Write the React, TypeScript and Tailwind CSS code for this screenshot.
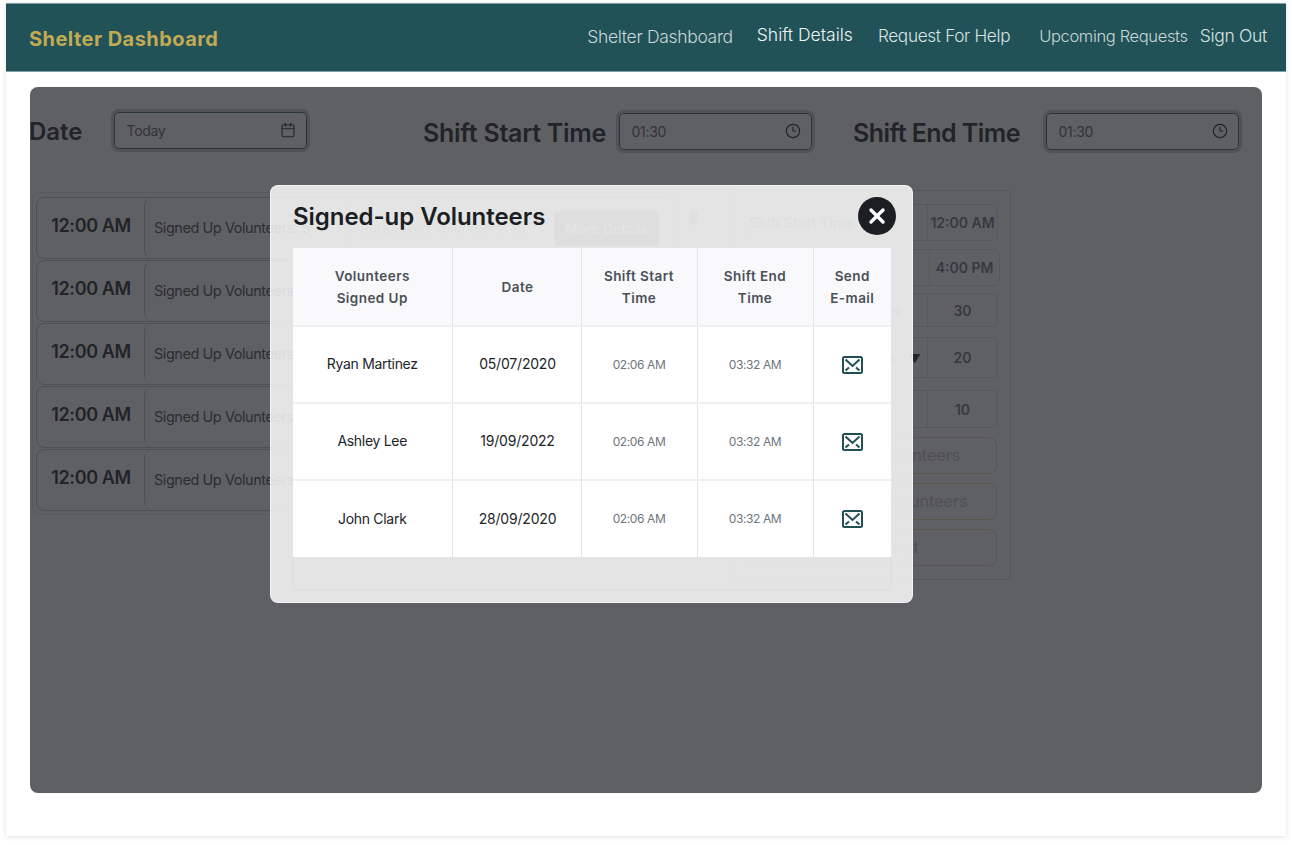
import { Calendar, Clock3, X } from "lucide-react";

const sans = "font-['Inter','Noto_Sans',sans-serif]";

const volunteers = [
  { name: "Ryan Martinez", date: "05/07/2020" },
  { name: "Ashley Lee", date: "19/09/2022" },
  { name: "John Clark", date: "28/09/2020" },
];

function MailIcon() {
  return (
    <svg width="21" height="18" viewBox="0 0 21 18" fill="none" className="mx-auto" stroke="#214f54">
      <rect x="1" y="1" width="19" height="16" rx="1.5" strokeWidth="2" />
      <path d="M3.5 3.5 10.5 10 17.5 3.5" strokeWidth="2" />
      <path d="M3.5 14.5 7 11.5M17.5 14.5 14 11.5" strokeWidth="2" />
    </svg>
  );
}

function TimeField({ value, className }: { value: string; className?: string }) {
  return (
    <div className={`flex h-[37px] w-[193px] items-center justify-between rounded-[5px] border-[1.5px] border-[#3f5f68] pl-[11.5px] pr-[10.5px] text-[14px] tracking-[-0.3px] text-[#5c6166] ring-[3px] ring-[#c8ced2] ${className ?? ""}`}>
      <span className="pt-px">{value}</span>
      {value === "Today" ? (
        <Calendar size={16} strokeWidth={1.6} className="text-[#212529]" />
      ) : (
        <Clock3 size={16} strokeWidth={1.8} className="text-[#212529]" />
      )}
    </div>
  );
}

function ShiftRow() {
  return (
    <div className="flex h-[62px] shrink-0 items-stretch rounded-lg border border-[#c1c4c8]">
      <div className="flex w-[107px] shrink-0 items-center justify-center pb-1.5 pl-px text-[18px] font-semibold tracking-[-0.35px] text-[#212529]">
        12:00 AM
      </div>
      <div className="flex w-[205px] shrink-0 items-center rounded-lg border-l border-[#c1c4c8] pl-[9px] text-[14.5px] tracking-[-0.45px] text-[#45494e]">
        Signed Up Volunteers: 5
      </div>
      <div className="flex w-[205px] shrink-0 items-center border-l border-[#d5d7da] pl-2.5 text-[14.5px] tracking-[-0.3px] text-[#9ca1a6]">
        Requested volunteers: 15
      </div>
      <div className="flex items-center">
        <div className="flex h-[35px] w-[105px] items-center justify-center rounded bg-[#848a8c] text-[14px] text-white">
          More Details
        </div>
      </div>
    </div>
  );
}

function DetailRow({ label, value, className, labelClass }: { label: React.ReactNode; value: string; className: string; labelClass: string }) {
  return (
    <div className={`flex items-center rounded-md border border-[#e0e2e4] ${className}`}>
      <div className={`flex-1 text-[14px] font-semibold text-[#8a8d92] ${labelClass}`}>{label}</div>
      <div className="flex h-full w-[70px] items-center justify-center border-l border-[#e0e2e4] text-[14px] font-semibold text-[#6c7380]">
        {value}
      </div>
    </div>
  );
}

function ActionButton({ label }: { label: string }) {
  return (
    <div className="flex h-[37px] w-[252px] items-center justify-center rounded-lg border border-[#e5d9a0] text-[16.5px] tracking-[-0.2px] text-[#c9c8b0]">
      {label}
    </div>
  );
}

export default function App() {
  return (
    <div className={`h-[845px] bg-white pt-[3px] ${sans}`}>
      <div className="mx-[6px] h-[833px] bg-white shadow-[0_1px_5px_rgba(0,0,0,0.12)]">
        <nav className="flex h-[69px] items-center border-y border-[#7f9ea1] bg-[#215257] pb-1 pl-[23px] pr-[19px]">
          <div className="mr-auto pt-1.5 text-[20px] font-bold tracking-[0.45px] text-[#c3aa55]">Shelter Dashboard</div>
          <a className="pt-1 text-[17.5px] font-light tracking-[-0.33px] text-[#c9d6d7]">Shelter Dashboard</a>
          <a className="ml-6 text-[17.5px] font-light tracking-[0px] text-[#f1f5f5]">Shift Details</a>
          <a className="ml-[25px] text-[17.2px] font-light tracking-[-0.33px] text-[#d8e2e2]">Request For Help</a>
          <a className="ml-[29px] pt-0.5 text-[16.5px] font-light tracking-[-0.35px] text-[#c9d6d7]">Upcoming Requests</a>
          <a className="ml-3 pt-0.5 text-[17.5px] font-light tracking-[-0.3px] text-[#d8e2e2]">Sign Out</a>
        </nav>

        <main className="relative mx-6 mt-[15px] h-[706px] overflow-hidden rounded-lg bg-white">
          <div className="mt-[21px] flex h-[44px] items-center">
            <div className="-ml-px w-[85px] pt-1 text-[24px] font-semibold leading-none text-[#212529]">Date</div>
            <TimeField value="Today" />
            <div className="ml-[116px] w-[196px] pt-[7px] text-[25px] font-semibold leading-none tracking-[-0.27px] text-[#212529]">
              Shift Start Time
            </div>
            <TimeField value="01:30" className="mt-0.5" />
            <div className="ml-[41px] w-[193px] pt-[7px] text-[25px] font-semibold leading-none tracking-[-0.55px] text-[#212529]">
              Shift End Time
            </div>
            <TimeField value="01:30" className="mt-0.5" />
          </div>

          <div className="flex items-start pt-10">
            <div className="ml-0.5 flex h-[323px] w-[648px] flex-col gap-px overflow-hidden rounded-lg border border-[#e6e7e9] py-1 pl-[3px] pr-1">
              <ShiftRow />
              <ShiftRow />
              <ShiftRow />
              <ShiftRow />
              <ShiftRow />
            </div>
            <div className="relative ml-[9px] mt-[19px] h-[14px] w-[9px] rounded-[3px] bg-[#9aa0a3]" />
            <div className="-mt-0.5 ml-[32px] h-[390px] w-[281px] rounded border border-[#dadcdf] pl-[14px] pt-[13px]">
              <DetailRow label="Shift Start Time" value="12:00 AM" className="h-[37px] w-[253px]" labelClass="pl-[3px]" />
              <DetailRow label="Shift End Time" value="4:00 PM" className="mt-2 h-[37px] w-[255px]" labelClass="pl-[3px]" />
              <DetailRow label="Total Volunteers" value="30" className="mt-[7px] h-[34px] w-[253px]" labelClass="pr-[26px] text-right" />
              <DetailRow
                label={
                  <>
                    Signed Volunteers<span className="ml-[13px] text-[12px] text-[#212529]">▼</span>
                  </>
                }
                value="20"
                className="mt-2.5 h-[41px] w-[253px]"
                labelClass="pr-[6px] text-right"
              />
              <DetailRow label="Open Slots" value="10" className="mt-3 h-[38px] w-[253px]" labelClass="pl-[3px]" />
              <div className="mt-[9px] flex flex-col gap-[9px]">
                <ActionButton label="Message All Volunteers" />
                <ActionButton label="Message Past Volunteers" />
                <ActionButton label="Edit Request" />
              </div>
            </div>
          </div>

          <div className="absolute inset-0 bg-[#212228]/[0.72]">
            <div className="absolute left-[240px] top-[98px] h-[418px] w-[643px] rounded-lg border border-white/60 bg-white/[0.83] pl-[22px] pt-[13px]">
              <h2 className="text-[24px] font-semibold leading-9 tracking-[-0.05px] text-[#1b1e23]">Signed-up Volunteers</h2>
              <button className="absolute left-[587px] top-[11px] flex h-[38px] w-[38px] items-center justify-center rounded-full bg-[#1b1e23] text-white">
                <X size={24} strokeWidth={3.4} />
              </button>

              <table className="mt-[13px] w-[598px] table-fixed border-collapse rounded-t text-center">
                <colgroup>
                  <col className="w-[159px]" />
                  <col className="w-[129px]" />
                  <col className="w-[116px]" />
                  <col className="w-[116px]" />
                  <col className="w-[78px]" />
                </colgroup>
                <thead>
                  <tr className="h-[78px] border-b-2 border-[#eef0f3] bg-[#f9f9fb] text-[13.5px] font-semibold leading-[22px] tracking-[0.45px] text-[#495057]">
                    <th className="font-semibold">
                      Volunteers
                      <br />
                      Signed Up
                    </th>
                    <th className="border-l border-[#e3e4ea] pl-0.5 font-semibold">Date</th>
                    <th className="border-l border-[#e3e4ea] font-semibold">
                      Shift Start
                      <br />
                      Time
                    </th>
                    <th className="border-l border-[#e3e4ea] font-semibold">
                      Shift End
                      <br />
                      Time
                    </th>
                    <th className="border-l border-[#e3e4ea] font-semibold">
                      Send
                      <br />
                      E-mail
                    </th>
                  </tr>
                </thead>
                <tbody>
                  {volunteers.map((v, i) => (
                    <tr key={v.name} className={`h-[77px] bg-white ${i < 2 ? "border-b-2 border-[#eef0f3]" : ""}`}>
                      <td className="pb-0.5 text-[14px] tracking-[-0.3px] text-[#212529]">{v.name}</td>
                      <td className="border-l border-[#e3e4ea] pb-0.5 pl-0.5 text-[14px] tracking-[-0.2px] text-[#212529]">{v.date}</td>
                      <td className="border-l border-[#e3e4ea] text-[12px] tracking-[-0.4px] text-[#6c757d]">02:06 AM</td>
                      <td className="border-l border-[#e3e4ea] text-[12px] tracking-[-0.4px] text-[#6c757d]">03:32 AM</td>
                      <td className="border-l border-[#e3e4ea]">
                        <MailIcon />
                      </td>
                    </tr>
                  ))}
                </tbody>
              </table>
              <div className="h-[33px] w-[598px] rounded-b border border-t-0 border-[#dcdde0]" />
            </div>
          </div>
        </main>
      </div>
    </div>
  );
}
